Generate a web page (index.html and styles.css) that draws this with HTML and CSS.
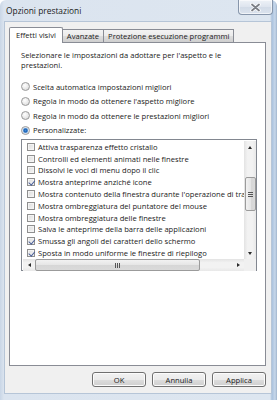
FILE: index.html
```html
<!DOCTYPE html>
<html lang="it">
<head>
    <meta charset="UTF-8">
    <meta name="viewport" content="width=device-width, initial-scale=1.0">
    <title>Opzioni prestazioni</title>
    <link rel="stylesheet" href="styles.css">
</head>
<body>
    <div class="window">
        <div class="titlebar">
            <span class="title">Opzioni prestazioni</span>
            <button class="close-btn" aria-label="Chiudi">
                <svg width="11" height="9" viewBox="0 0 11 9">
                    <path d="M2 1.5 L9 7.5 M9 1.5 L2 7.5" stroke="#ffffff" stroke-width="3.4" stroke-linecap="round"/>
                    <path d="M2 1.5 L9 7.5 M9 1.5 L2 7.5" stroke="#7b7f86" stroke-width="1.8" stroke-linecap="round"/>
                </svg>
            </button>
        </div>

        <div class="client">
            <div class="tabs">
                <div class="tab active">Effetti visivi</div>
                <div class="tab">Avanzate</div>
                <div class="tab">Protezione esecuzione programmi</div>
            </div>

            <div class="panel">
                <p class="intro">Selezionare le impostazioni da adottare per l'aspetto e le prestazioni.</p>

                <div class="radios">
                    <label class="radio"><span class="dot"></span>Scelta automatica impostazioni migliori</label>
                    <label class="radio"><span class="dot"></span>Regola in modo da ottenere l'aspetto migliore</label>
                    <label class="radio"><span class="dot"></span>Regola in modo da ottenere le prestazioni migliori</label>
                    <label class="radio checked"><span class="dot"></span>Personalizzate:</label>
                </div>

                <div class="listbox">
                    <div class="list-main">
                        <div class="rows">
                            <div class="row"><span class="box"></span>Attiva trasparenza effetto cristallo</div>
                            <div class="row"><span class="box"></span>Controlli ed elementi animati nelle finestre</div>
                            <div class="row"><span class="box"></span>Dissolvi le voci di menu dopo il clic</div>
                            <div class="row"><span class="box checked"></span>Mostra anteprime anziché icone</div>
                            <div class="row"><span class="box"></span>Mostra contenuto della finestra durante l'operazione di trascinamento</div>
                            <div class="row"><span class="box"></span>Mostra ombreggiatura del puntatore del mouse</div>
                            <div class="row"><span class="box"></span>Mostra ombreggiatura delle finestre</div>
                            <div class="row"><span class="box"></span>Salva le anteprime della barra delle applicazioni</div>
                            <div class="row"><span class="box checked"></span>Smussa gli angoli dei caratteri dello schermo</div>
                            <div class="row"><span class="box checked"></span>Sposta in modo uniforme le finestre di riepilogo</div>
                        </div>
                        <div class="vscroll">
                            <span class="arrow up"></span>
                            <div class="vtrack"><div class="vthumb"><span class="grip-h"></span></div></div>
                            <span class="arrow down"></span>
                        </div>
                    </div>
                    <div class="list-bottom">
                        <div class="hscroll">
                            <span class="arrow left"></span>
                            <div class="htrack"><div class="hthumb"><span class="grip-v"></span></div></div>
                            <span class="arrow right"></span>
                        </div>
                        <div class="corner"></div>
                    </div>
                </div>
            </div>

            <div class="buttons">
                <button class="btn">OK</button>
                <button class="btn">Annulla</button>
                <button class="btn">Applica</button>
            </div>
        </div>
    </div>
</body>
</html>
```

FILE: styles.css
```css
* {
    box-sizing: border-box;
    margin: 0;
    padding: 0;
}

body {
    font-family: "Open Sans", "Noto Sans", sans-serif;
    font-size: 7.6px;
    color: #1a1a1a;
    background-color: #ffffff;
}

.window {
    width: 277px;
    height: 400px;
    display: flex;
    flex-direction: column;
    background: linear-gradient(90deg, #c9d6e6 0px, #dbe4ef 4px, #dde6f0 270px, #aac2de 272px, #c7d7ea 275px, #9fb4cc 277px);
    border-radius: 6px 6px 0 0;
}

/* Title bar */
.titlebar {
    height: 22px;
    display: flex;
    align-items: flex-start;
    padding-left: 6px;
    padding-right: 4px;
}

.title {
    margin-top: 5px;
    font-size: 8.4px;
    line-height: 12px;
    color: #1a1a1a;
}

.close-btn {
    margin-left: auto;
    width: 35px;
    height: 15px;
    border: 1px solid #8796ab;
    border-top: none;
    border-radius: 0 0 4px 4px;
    background: linear-gradient(#eef2f7, #dde4ee 50%, #d2dbe7 51%, #dbe3ee);
    display: flex;
    align-items: center;
    justify-content: center;
    box-shadow: inset 0 0 0 1px rgba(255,255,255,0.6);
}

/* Client area */
.client {
    flex: 1;
    margin: 0 6px 7px 5px;
    background-color: #f0f0f0;
    padding: 5px 5px 0 4px;
    display: flex;
    flex-direction: column;
    box-shadow: 0 0 0 1px #b6c5d7;
}

.tabs {
    height: 15px;
    display: flex;
    align-items: flex-end;
}

.tab {
    height: 13px;
    padding: 0 4px;
    border: 1px solid #898c95;
    border-bottom: none;
    margin-left: -1px;
    background: linear-gradient(#f3f3f3, #ebebeb 50%, #dddddd 51%, #cfcfcf);
    line-height: 12px;
    white-space: nowrap;
}

.tab.active {
    height: 16px;
    margin-left: 0;
    margin-bottom: -1px;
    padding: 0 6px;
    background: #ffffff;
    line-height: 14px;
    position: relative;
    z-index: 1;
    border-radius: 2px 2px 0 0;
}

.tab.active + .tab {
    margin-left: 0;
    border-left: none;
}

.panel {
    height: 324px;
    background-color: #ffffff;
    border: 1px solid #898c95;
    padding: 8px 8px 0 11px;
}

.intro {
    line-height: 9.5px;
    width: 205px;
}

.radios {
    margin-top: 9.5px;
    display: flex;
    flex-direction: column;
}

.radio {
    height: 14.5px;
    display: flex;
    align-items: center;
    gap: 3px;
}

.dot {
    width: 9px;
    height: 9px;
    border-radius: 50%;
    border: 1px solid #9a9a9a;
    background: radial-gradient(circle at 40% 35%, #ffffff, #e6e6e6 60%, #cfcfcf);
    flex-shrink: 0;
}

.radio.checked .dot {
    background: radial-gradient(circle, #3d8ce0 0, #1f62b0 1.6px, #9cc2ec 2.6px, #f0f0f0 3.2px, #dcdcdc);
}

/* List box */
.listbox {
    margin-top: 1.5px;
    width: 236px;
    height: 132px;
    border: 1px solid #828790;
    padding: 1px 0 0 1px;
    display: flex;
    flex-direction: column;
}

.list-main {
    display: flex;
    height: 118px;
}

.rows {
    width: 221px;
    overflow: hidden;
}

.row {
    height: 11.8px;
    display: flex;
    align-items: center;
    gap: 3px;
    padding-left: 4px;
    white-space: nowrap;
}

.box {
    width: 8px;
    height: 8px;
    border: 1px solid #8f8f8f;
    background: linear-gradient(135deg, #dcdcdc, #f6f6f6);
    box-shadow: inset 0 0 0 1px #f4f4f4;
    flex-shrink: 0;
    position: relative;
}

.box.checked::after {
    content: "";
    position: absolute;
    left: 1.5px;
    top: 0px;
    width: 2.5px;
    height: 4.5px;
    border-right: 1.3px solid #4a5f98;
    border-bottom: 1.3px solid #4a5f98;
    transform: rotate(40deg);
}

.vscroll {
    width: 12px;
    height: 118px;
    display: flex;
    flex-direction: column;
    background: linear-gradient(90deg, #e3e3e3, #f2f2f2 30%, #f2f2f2 70%, #e8e8e8);
}

.arrow {
    width: 12px;
    height: 12px;
    display: flex;
    align-items: center;
    justify-content: center;
    flex-shrink: 0;
}

.arrow::before {
    content: "";
    border: 2.5px solid transparent;
}

.arrow.up::before { border-bottom: 3px solid #2a2a2a; border-top: none; }
.arrow.down::before { border-top: 3px solid #2a2a2a; border-bottom: none; }
.arrow.left::before { border-right: 3px solid #2a2a2a; border-left: none; }
.arrow.right::before { border-left: 3px solid #2a2a2a; border-right: none; }

.vtrack {
    flex: 1;
    padding-top: 24px;
}

.vthumb {
    height: 34px;
    margin: 0 0.5px;
    border: 1px solid #9b9b9b;
    border-radius: 2px;
    background: linear-gradient(90deg, #f2f2f2, #e5e5e5 50%, #d6d6d6 51%, #dadada);
    display: flex;
    align-items: center;
    justify-content: center;
}

.grip-h {
    width: 5px;
    height: 5px;
    background: repeating-linear-gradient(#555 0 1px, transparent 1px 2px);
}

.list-bottom {
    display: flex;
    height: 12px;
}

.hscroll {
    width: 221px;
    display: flex;
    background: linear-gradient(#e3e3e3, #f2f2f2 30%, #f2f2f2 70%, #e8e8e8);
}

.htrack {
    flex: 1;
    padding-right: 32px;
}

.hthumb {
    height: 12px;
    border: 1px solid #9b9b9b;
    border-radius: 2px;
    background: linear-gradient(#f2f2f2, #e5e5e5 50%, #d6d6d6 51%, #dadada);
    display: flex;
    align-items: center;
    justify-content: center;
}

.grip-v {
    width: 5px;
    height: 5px;
    background: repeating-linear-gradient(90deg, #555 0 1px, transparent 1px 2px);
}

.corner {
    width: 12px;
    background-color: #f0f0f0;
}

/* Dialog buttons */
.buttons {
    display: flex;
    justify-content: flex-end;
    gap: 6px;
    margin-top: 6px;
}

.btn {
    width: 54px;
    height: 15px;
    border: 1px solid #707070;
    border-radius: 3px;
    background: linear-gradient(#f2f2f2, #ebebeb 50%, #dddddd 51%, #cfcfcf);
    box-shadow: inset 0 0 0 1px #fcfcfc;
    font-family: "Open Sans", "Noto Sans", sans-serif;
    font-size: 7.6px;
    color: #1a1a1a;
    line-height: 12px;
}
```
